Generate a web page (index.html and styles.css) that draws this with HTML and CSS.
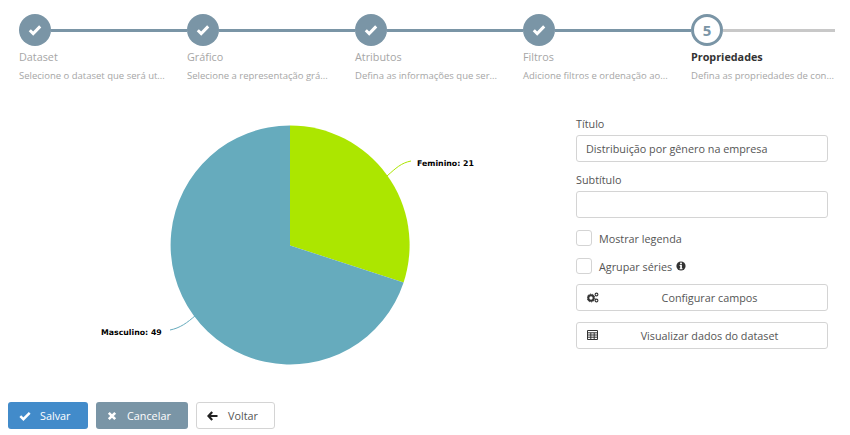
FILE: index.html
```html
<!DOCTYPE html>
<html lang="pt">
<head>
    <meta charset="UTF-8">
    <title>Propriedades</title>
    <link rel="stylesheet" href="styles.css">
</head>
<body>
<ol class="steps">
    <li class="step done">
        <div class="step-head">
            <span class="step-dot"><svg width="14" height="12" viewBox="0 0 14 12"><path d="M1.8 6.2 5.2 9.6 12.2 2.4" fill="none" stroke="#fff" stroke-width="3"/></svg></span>
            <span class="step-line"></span>
        </div>
        <p class="step-name">Dataset</p>
        <p class="step-desc">Selecione o dataset que será ut...</p>
    </li>
    <li class="step done">
        <div class="step-head">
            <span class="step-dot"><svg width="14" height="12" viewBox="0 0 14 12"><path d="M1.8 6.2 5.2 9.6 12.2 2.4" fill="none" stroke="#fff" stroke-width="3"/></svg></span>
            <span class="step-line"></span>
        </div>
        <p class="step-name">Gráfico</p>
        <p class="step-desc">Selecione a representação grá...</p>
    </li>
    <li class="step done">
        <div class="step-head">
            <span class="step-dot"><svg width="14" height="12" viewBox="0 0 14 12"><path d="M1.8 6.2 5.2 9.6 12.2 2.4" fill="none" stroke="#fff" stroke-width="3"/></svg></span>
            <span class="step-line"></span>
        </div>
        <p class="step-name">Atributos</p>
        <p class="step-desc">Defina as informações que ser...</p>
    </li>
    <li class="step done">
        <div class="step-head">
            <span class="step-dot"><svg width="14" height="12" viewBox="0 0 14 12"><path d="M1.8 6.2 5.2 9.6 12.2 2.4" fill="none" stroke="#fff" stroke-width="3"/></svg></span>
            <span class="step-line"></span>
        </div>
        <p class="step-name">Filtros</p>
        <p class="step-desc">Adicione filtros e ordenação ao...</p>
    </li>
    <li class="step current">
        <div class="step-head">
            <span class="step-dot">5</span>
            <span class="step-line"></span>
        </div>
        <p class="step-name">Propriedades</p>
        <p class="step-desc">Defina as propriedades de con...</p>
    </li>
</ol>

<div class="content">
    <div class="chart">
        <svg class="pie" width="576" height="280" viewBox="0 100 576 280">
            <path d="M290 125.5A119.5 119.5 0 0 1 403.6 282.4L290 245.5Z" fill="#ace600"/>
            <path d="M403.6 282.4A119.5 119.5 0 1 1 290 125.5L290 245.5Z" fill="#66abbd"/>
            <path d="M387 176C396 168 401 163 411 161" fill="none" stroke="#ace600"/>
            <path d="M170 330C180 328 187 323 196 315" fill="none" stroke="#66abbd"/>
            <text class="pie-label" x="417" y="166">Feminino: 21</text>
            <text class="pie-label" x="101" y="335">Masculino: 49</text>
        </svg>
    </div>
    <form class="props">
        <label class="field-label">Título</label>
        <input class="field" type="text" value="Distribuição por gênero na empresa">
        <label class="field-label">Subtítulo</label>
        <input class="field" type="text">
        <div class="check"><span class="check-box"></span>Mostrar legenda</div>
        <div class="check"><span class="check-box"></span>Agrupar séries
            <svg class="info" width="10" height="10" viewBox="0 0 10 10"><circle cx="5" cy="5" r="4.6" fill="#333"/><rect x="4.1" y="1.6" width="1.8" height="1.7" fill="#fff"/><path d="M3.6 4.1H5.9V7.3H6.5V8.3H3.6V7.3H4.2V5.1H3.6Z" fill="#fff"/></svg>
        </div>
        <button class="wide-btn" type="button">
            <svg class="wide-icon" width="12" height="11" viewBox="0 0 12 11"><circle cx="4" cy="6" r="2.7" fill="none" stroke="#333" stroke-width="2"/><circle cx="4" cy="6" r="3.9" fill="none" stroke="#333" stroke-width="1" stroke-dasharray="1.2 1.2"/><circle cx="9.5" cy="2.5" r="1.4" fill="none" stroke="#333" stroke-width="1.1"/><circle cx="9.5" cy="8.5" r="1.4" fill="none" stroke="#333" stroke-width="1.1"/></svg>
            Configurar campos
        </button>
        <button class="wide-btn" type="button">
            <svg class="wide-icon" width="11" height="10" viewBox="0 0 11 10"><path d="M.5.5H10.5V9.5H.5ZM.5 2.8H10.5M.5 5H10.5M.5 7.2H10.5M3.8 2.8V9.5M7.2 2.8V9.5" fill="none" stroke="#333"/></svg>
            Visualizar dados do dataset
        </button>
    </form>
</div>

<div class="actions">
    <button class="btn btn-primary" type="button">
        <svg width="12" height="10" viewBox="0 0 12 10"><path d="M1.3 5.2 4.4 8.2 10.7 1.8" fill="none" stroke="#fff" stroke-width="2.5"/></svg>
        Salvar
    </button>
    <button class="btn btn-muted" type="button">
        <svg width="10" height="10" viewBox="0 0 10 10"><path d="M1.8 1.8 8.2 8.2M8.2 1.8 1.8 8.2" fill="none" stroke="#fff" stroke-width="2.6"/></svg>
        Cancelar
    </button>
    <button class="btn btn-plain" type="button">
        <svg width="11" height="10" viewBox="0 0 11 10"><path d="M5.2 1 1.5 5 5.2 9M2 5H10.5" fill="none" stroke="#222" stroke-width="2.2"/></svg>
        Voltar
    </button>
</div>
</body>
</html>
```

FILE: styles.css
```css
/* reset */
body,ol,li,p,form,input,button,label{margin:0;padding:0}
ol,li{list-style:none}
html,body{width:100%;height:100%}
body{
    font-family:"Open Sans",sans-serif;
    font-size:10.8px;
    color:#555555;
    background:#ffffff;
    overflow:hidden;
}
/* //reset */

.steps{
    display:flex;
    padding:14px 15px 0 19px;
}
.step{
    flex:0 0 168px;
}
.step.current{
    flex-basis:144px;
}
.step-head{
    display:flex;
    align-items:center;
    height:32px;
}
.step-dot{
    flex:none;
    display:flex;
    align-items:center;
    justify-content:center;
    box-sizing:border-box;
    width:32px;
    height:32px;
    border-radius:50%;
    background:#7a95a6;
}
.step-line{
    flex:1;
    height:3px;
    background:#7a95a6;
}
.step-name{
    margin-top:2px;
    font-size:10.8px;
    line-height:17px;
    color:#a6a6a6;
}
.step-desc{
    margin-top:4px;
    font-size:9.5px;
    line-height:14px;
    color:#a6a6a6;
    white-space:nowrap;
}
.step.current .step-dot{
    border:3px solid #7a95a6;
    background:#ffffff;
    color:#7a95a6;
    font-size:15px;
    font-weight:700;
}
.step.current .step-line{
    background:#c8c8c8;
}
.step.current .step-name{
    font-weight:700;
    color:#333333;
}

.content{
    display:flex;
    height:308px;
}
.chart{
    flex:0 0 576px;
}
.pie{
    display:block;
    margin-top:17px;
}
.pie-label{
    font-family:"DejaVu Sans",sans-serif;
    font-size:7.8px;
    font-weight:700;
    fill:#000000;
}
.props{
    flex:0 0 252px;
    padding-top:32px;
}
.field-label{
    display:block;
    font-size:10.8px;
    line-height:17px;
    color:#555555;
}
.field{
    display:block;
    box-sizing:border-box;
    width:252px;
    height:27px;
    margin:3px 0 9px;
    padding:0 9px;
    border:1px solid #d4d4d4;
    border-radius:3px;
    font-family:inherit;
    font-size:10.8px;
    color:#555555;
    outline:none;
}
.check{
    display:flex;
    align-items:center;
    height:16px;
    margin-top:12px;
    color:#555555;
}
.check-box{
    box-sizing:border-box;
    width:16px;
    height:16px;
    margin-right:7px;
    border:1px solid #d4d4d4;
    border-radius:3px;
}
.info{
    margin-left:4px;
}
.wide-btn{
    position:relative;
    display:block;
    box-sizing:border-box;
    width:252px;
    height:27px;
    margin-top:10px;
    padding-left:15px;
    border:1px solid #d4d4d4;
    border-radius:3px;
    background:#ffffff;
    font-family:inherit;
    font-size:10.8px;
    color:#555555;
    text-align:center;
}
.wide-btn + .wide-btn{
    margin-top:11px;
}
.wide-icon{
    position:absolute;
    left:10px;
    top:7px;
}

.actions{
    display:flex;
    gap:8px;
    padding:11px 0 0 8px;
}
.btn{
    display:flex;
    align-items:center;
    box-sizing:border-box;
    height:27px;
    padding:0 0 0 10px;
    gap:10px;
    border:1px solid transparent;
    border-radius:3px;
    font-family:inherit;
    font-size:10.8px;
    color:#ffffff;
}
.btn svg{
    flex:none;
}
.btn-primary{
    width:80px;
    gap:9px;
    background:#428bca;
}
.btn-muted{
    width:92px;
    background:#7a95a6;
}
.btn-plain{
    width:79px;
    background:#ffffff;
    border-color:#d4d4d4;
    color:#555555;
}
```
